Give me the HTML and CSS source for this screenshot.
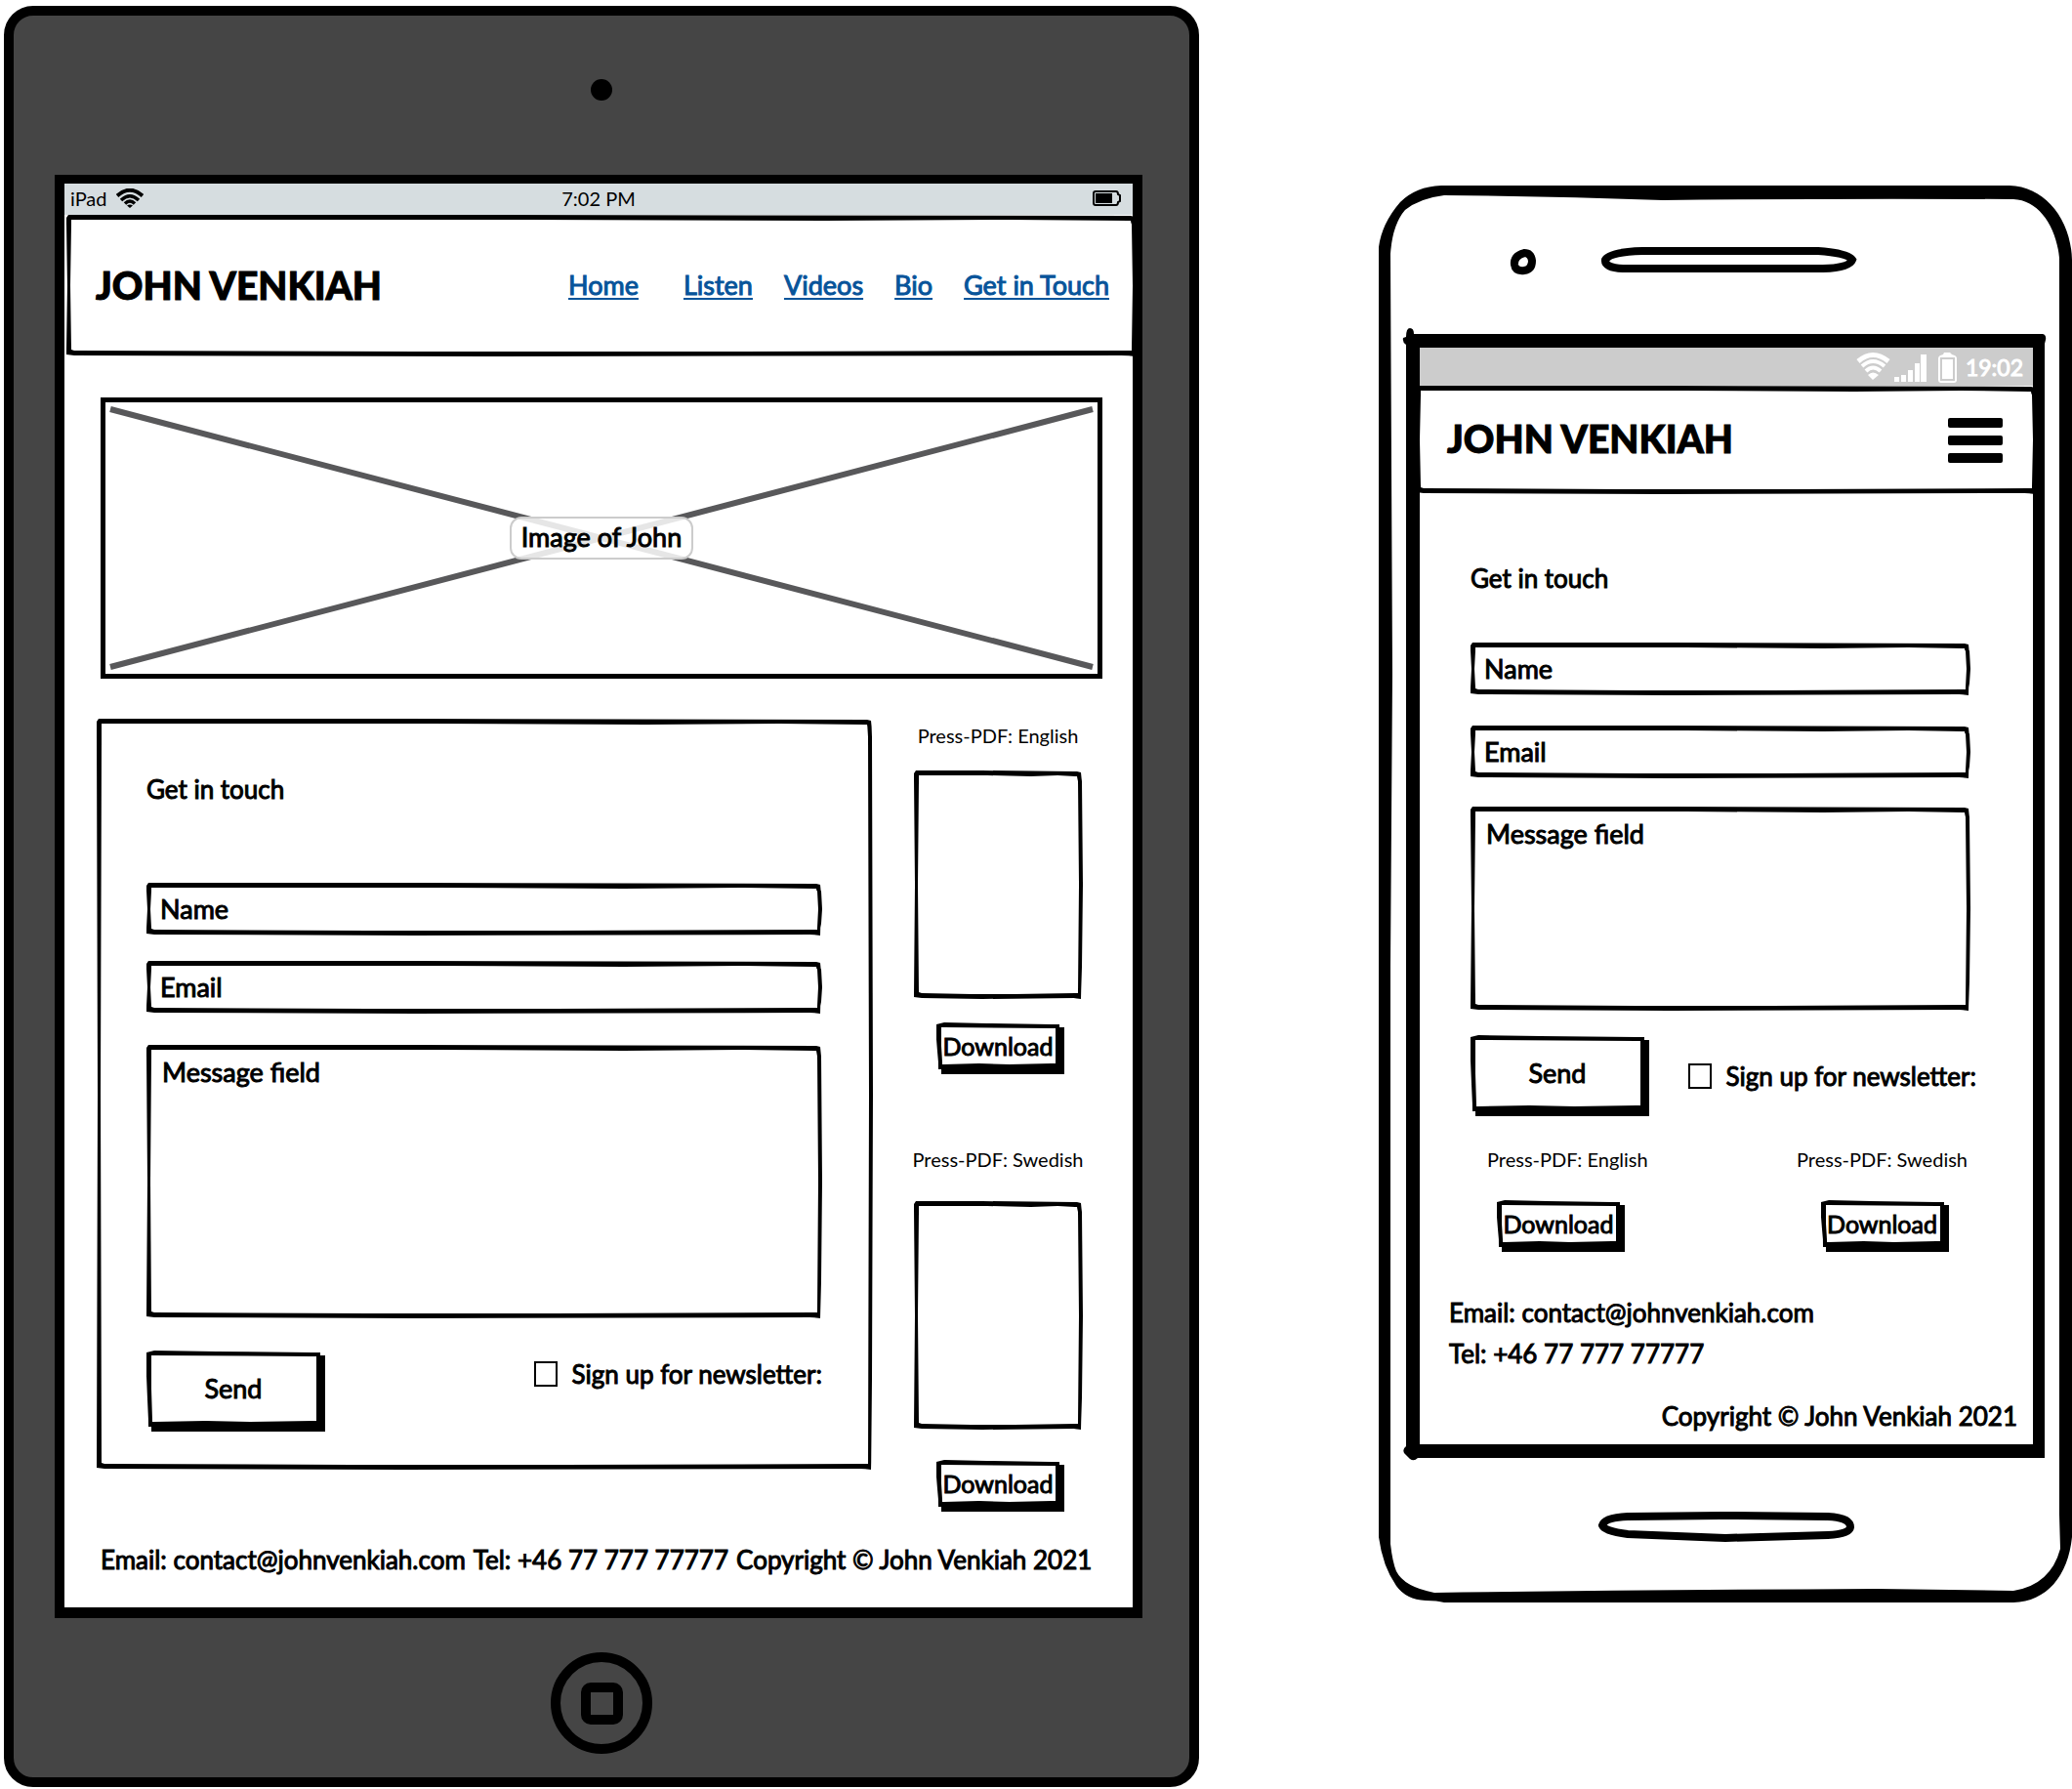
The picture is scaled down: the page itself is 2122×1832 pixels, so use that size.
FILE: index.html
```html
<!DOCTYPE html>
<html lang="en">
<head>
<meta charset="utf-8">
<meta name="viewport" content="width=device-width, initial-scale=1">
<title>John Venkiah – Get in touch</title>
<link rel="stylesheet" href="styles.css">
</head>
<body>
<div class="board">

  <section class="tablet" aria-label="Tablet">
    <div class="bezel bezel-top"><span class="camera"></span></div>
    <div class="tablet-screen">
      <div class="status">
        <span class="carrier">iPad
          <svg class="wifi" viewBox="0 0 28 20" aria-hidden="true"><g fill="none" stroke="currentColor" stroke-width="4"><path d="M1 7.500Q14-4 27 7.500"/><path stroke-width="3.500" d="M5 12Q14 3.500 23 12"/><path stroke-width="3.500" d="M9 15.500Q14 10.500 19 15.500"/></g><path d="M11 17.500Q14 15.500 17 17.500L14 20Z"/></svg>
        </span>
        <span>7:02 PM</span>
        <span class="power"><svg class="battery" viewBox="0 0 30 16" aria-hidden="true"><path d="M3 1H24Q26 1 26 4L28 5V11L26 12Q26 15 24 15H3Q1 15 1 13V3Q1 1 3 1Z" fill="none" stroke="currentColor" stroke-width="2"/><path d="M3 3H20V13H3Z"/></svg></span>
      </div>
      <header class="site-header sketch">
        <h1 class="logo">JOHN VENKIAH</h1>
        <nav class="nav">
          <a class="nav-home" href="#home">Home</a>
          <a href="#listen">Listen</a>
          <a href="#videos">Videos</a>
          <a href="#bio">Bio</a>
          <a href="#touch">Get in Touch</a>
        </nav>
      </header>
      <main class="tablet-main">
        <figure class="hero">
          <svg class="cross" viewBox="0 0 1008 270" preserveAspectRatio="none" aria-hidden="true"><path d="M1 3L1007 267M1 267L1007 3"/></svg>
          <figcaption class="hero-label">Image of John</figcaption>
        </figure>
        <div class="columns">
          <form class="card sketch">
            <h2 class="title">Get in touch</h2>
            <input class="field sketch" type="text" placeholder="Name" aria-label="Name">
            <input class="field sketch" type="email" placeholder="Email" aria-label="Email">
            <textarea class="field area sketch" placeholder="Message field" aria-label="Message field"></textarea>
            <div class="actions">
              <button class="button send" type="button">Send</button>
              <label class="check"><input type="checkbox"><span>Sign up for newsletter:</span></label>
            </div>
          </form>
          <aside class="press">
            <section class="pdf">
              <h3 class="caption">Press-PDF: English</h3>
              <div class="thumb sketch"></div>
              <button class="button" type="button">Download</button>
            </section>
            <section class="pdf pdf-loose">
              <h3 class="caption">Press-PDF: Swedish</h3>
              <div class="thumb sketch"></div>
              <button class="button" type="button">Download</button>
            </section>
          </aside>
        </div>
      </main>
      <footer class="tablet-footer">
        <span>Email: contact@johnvenkiah.com</span>
        <span>Tel: +46 77 777 77777</span>
        <span class="copyright">Copyright © John Venkiah 2021</span>
      </footer>
    </div>
    <div class="bezel bezel-bottom"><span class="home"><span class="home-mark"></span></span></div>
  </section>

  <section class="phone" aria-label="Phone">
    <svg class="phone-frame" viewBox="0 0 710 1450" preserveAspectRatio="none" aria-hidden="true">
      <path fill-rule="evenodd" d="M64 0H646C682 1 709 34 710 76V1383C706 1423 684 1449 650 1450H67Q60 1448 48 1448Q28 1447 18 1433Q4 1413 0 1383V63Q3 39 22 17Q38 1 64 0ZM67 10Q42 13 27 25Q14 40 12 70L14 500L12 800V1390Q14 1408 18 1418Q26 1434 57 1440Q290 1437 510 1436L650 1438Q688 1432 698 1395L697 1360V74C694 42 676 15 650 14Q460 13 291 15Q180 11 67 10Z"/>
      <path fill-rule="evenodd" d="M28 155Q28 146 32 146Q36 146 36 152H680Q684 153 683 158L682 162V1302H40Q36 1306 32 1303L26 1297Q24 1293 28 1290V163Q24 160 25 156ZM42 166V1288H670V166Z"/>
      <g fill="none" stroke="#000">
        <path stroke-width="8" d="M149 69Q138 72 139 81Q140 88 149 87Q157 86 157 77Q156 69 149 69Z"/>
        <path stroke-width="8" d="M270 67H390L450 67Q480 69 485 76Q482 84 455 85H250Q231 84 232 76Q237 68 270 67Z"/>
        <path stroke-width="8" d="M255 1362L350 1361L460 1362Q483 1363 483 1373Q482 1380 460 1381L355 1384L255 1380Q231 1377 229 1371Q231 1363 255 1362Z"/>
      </g>
    </svg>
    <div class="phone-screen">
      <div class="phone-status">
        <svg class="phone-icons" viewBox="0 0 104 32" aria-hidden="true"><g fill="none" stroke="currentColor" stroke-width="5"><path d="M2 10Q17-3 33 10"/><path stroke-width="4" d="M6 15Q17 5 29 15"/><path stroke-width="4" d="M10 20Q17 13 25 20"/></g><path d="M12 24Q17 19 23 24L17 29ZM39 26H44V31H39ZM46 24H51V31H46ZM53 19H58V31H53ZM60 12H65V31H60ZM66 3H72V31H66Z"/><path fill-rule="evenodd" d="M90 1H96L98 3Q103 4 103 7V29Q103 32 100 32H87Q84 32 84 29V7Q84 4 89 3ZM86 6V30H101V6Z"/><path d="M88 8H99V28H88Z"/></svg>
        <span>19:02</span>
      </div>
      <header class="phone-header sketch">
        <h1 class="logo">JOHN VENKIAH</h1>
        <button class="menu" type="button" aria-label="Menu"><span></span><span></span><span></span></button>
      </header>
      <form class="phone-form">
        <h2 class="title">Get in touch</h2>
        <input class="field sketch" type="text" placeholder="Name" aria-label="Name">
        <input class="field sketch" type="email" placeholder="Email" aria-label="Email">
        <textarea class="field area sketch" placeholder="Message field" aria-label="Message field"></textarea>
        <div class="actions">
          <button class="button send" type="button">Send</button>
          <label class="check"><input type="checkbox"><span>Sign up for newsletter:</span></label>
        </div>
      </form>
      <div class="phone-press">
        <section class="pdf pdf-start">
          <h3 class="caption">Press-PDF: English</h3>
          <button class="button" type="button">Download</button>
        </section>
        <section class="pdf">
          <h3 class="caption">Press-PDF: Swedish</h3>
          <button class="button" type="button">Download</button>
        </section>
      </div>
      <footer class="phone-footer">
        <span>Email: contact@johnvenkiah.com</span>
        <span>Tel: +46 77 777 77777</span>
        <span class="copyright">Copyright © John Venkiah 2021</span>
      </footer>
    </div>
  </section>

</div>
</body>
</html>
```
FILE: styles.css
```css
*,
*::before,
*::after {
  box-sizing: border-box;
}

body {
  margin: 0;
  background: #fff;
  color: #000;
  font: 27px/30px Lato, "Open Sans", sans-serif;
  -webkit-text-stroke: 1px currentColor;
}

h1, h2, h3, figure {
  margin: 0;
  font-weight: inherit;
}

input, textarea, button {
  margin: 0;
  font: inherit;
  color: inherit;
}

svg {
  display: block;
  fill: currentColor;
}

.board {
  display: grid;
  grid-template-columns: minmax(0, 1224fr) minmax(0, 710fr);
  column-gap: 184px;
  align-items: start;
  padding: 6px 0 4px 4px;
}

/* Hand-drawn outline: the edges stretch, the line weight does not */
.sketch {
  border: 5px solid #000;
  border-image: url("data:image/svg+xml,%3Csvg xmlns='http://www.w3.org/2000/svg' width='300' height='300'%3E%3Cpath fill-rule='evenodd' d='M2 0L120 0L294 1L298 2L299 12L300 150L299 260L298 300L290 299L120 300L8 299L0 298L1 150L0 8L0 3ZM5 5L130 5L210 6L260 5L294 6L295 12L296 150L295 294L180 295L100 295L8 294L5 293L4 150L5 12Z'/%3E%3C/svg%3E") 8 / 8px;
}

/* Tablet */
.tablet {
  border: 10px solid #000;
  border-radius: 30px;
  background: #454545;
  padding: 0 48px 0 42px;
}

.bezel {
  display: flex;
  justify-content: center;
  height: 163px;
  margin-right: -6px;
}

.bezel-top { padding-top: 65px; }
.bezel-bottom { padding-top: 35px; }

.camera {
  width: 22px;
  height: 22px;
  border-radius: 50%;
  background: #000;
}

.home {
  display: grid;
  place-content: center;
  width: 104px;
  height: 104px;
  border: 10px solid #000;
  border-radius: 50%;
}

.home-mark {
  width: 43px;
  height: 43px;
  border: 10px solid #000;
  border-radius: 10px;
}

.tablet-screen {
  border: solid #000;
  border-width: 9px 10px 11px;
  background: #fff;
}

.status {
  display: grid;
  grid-template-columns: 1fr auto 1fr;
  align-items: center;
  height: 32px;
  padding: 0 6px 3px;
  background: #d6dde0;
  font-size: 20px;
  line-height: 24px;
  -webkit-text-stroke: 0;
}

.carrier {
  display: flex;
  align-items: center;
  gap: 10px;
}

.wifi { width: 28px; height: 20px; }

.power {
  justify-self: end;
  margin-right: 5px;
}

.battery { width: 30px; height: 16px; }

.site-header {
  display: flex;
  align-items: center;
  justify-content: space-between;
  min-height: 145px;
  margin: 0 -4px 0 2px;
  padding: 0 23px 2px 25px;
}

.logo {
  font-size: 39px;
  line-height: 48px;
  font-weight: 900;
}

.nav {
  display: flex;
  gap: 32px;
}

.nav a {
  color: #07549a;
  text-decoration-thickness: 2px;
  text-underline-offset: 3px;
}

.nav-home { margin-right: 14px; }

.tablet-main { padding: 42px 31px 0 33px; }

.hero {
  display: grid;
  place-items: center;
  height: 288px;
  margin-left: 4px;
  border: 5px solid #000;
  padding: 4px;
}

.hero > * { grid-area: 1 / 1; }

.cross {
  width: 100%;
  height: 270px;
  fill: none;
  stroke: #58585a;
  stroke-width: 6;
}

.hero-label {
  z-index: 1;
  padding: 4px 10px 6px;
  border: 2px solid #ccc;
  border-radius: 12px;
  background: rgba(255, 255, 255, 0.85);
}

.columns {
  display: grid;
  grid-template-columns: minmax(0, 1fr) 180px;
  column-gap: 38px;
  align-items: start;
  margin-top: 41px;
  padding-right: 17px;
}

/* Form */
.card,
.phone-form {
  display: flex;
  flex-direction: column;
}

.card { padding: 52px 47px 39px 46px; }

.title {
  font-size: 26px;
  line-height: 30px;
}

.field {
  display: block;
  width: 100%;
  height: 54px;
  padding: 0 9px 2px;
  background: #fff;
  outline: none;
}

.field::placeholder {
  color: #000;
  opacity: 1;
}

.area {
  padding: 8px 11px;
  resize: none;
}

.card .field { margin-top: 26px; }
.card .title + .field { margin-top: 81px; }
.card .area { height: 280px; margin-top: 32px; }

.actions {
  display: flex;
  justify-content: space-between;
  align-items: flex-start;
}

.card .actions { margin-top: 33px; }

/* Same drawn line, closed square on the two sides that meet the shadow */
.button {
  flex: none;
  width: 126px;
  height: 48px;
  padding: 0;
  border: 5px solid #000;
  border-image: url("data:image/svg+xml,%3Csvg xmlns='http://www.w3.org/2000/svg' width='300' height='300'%3E%3Cpath fill-rule='evenodd' d='M8 0L120 1L300 2V300H2L1 200L0 90L0 2ZM5 5L296 6V294L180 295L100 294L6 295L5 150Z'/%3E%3C/svg%3E") 8 / 8px;
  background: #fff;
  box-shadow: 5px 5px 0 #000;
  font-size: 25px;
  white-space: nowrap;
}

.send {
  width: 178px;
  height: 78px;
  font-size: 27px;
}

.check {
  display: flex;
  align-items: center;
  gap: 15px;
  padding-top: 9px;
  font-size: 26px;
  white-space: nowrap;
}

.check input {
  appearance: none;
  width: 24px;
  height: 26px;
  border: 2px solid #000;
  background: #fff;
}

/* Press material */
.press {
  display: grid;
  gap: 80px;
  padding-top: 5px;
}

.pdf {
  display: flex;
  flex-direction: column;
  align-items: center;
  gap: 24px;
}

.pdf-loose { gap: 31px; }

.caption {
  font-size: 20px;
  line-height: 24px;
  white-space: nowrap;
  -webkit-text-stroke: 0;
}

.thumb {
  width: 173px;
  height: 234px;
}

.tablet-footer {
  display: flex;
  gap: 8px;
  padding: 39px 44px 34px 37px;
  font-size: 26px;
  white-space: nowrap;
}

.tablet-footer .copyright { margin-left: auto; }

/* Phone */
.phone {
  position: relative;
  margin-top: 184px;
  padding: 166px 40px 162px 42px;
}

.phone-frame {
  position: absolute;
  inset: 0;
  width: 100%;
  height: 100%;
}

.phone-screen { position: relative; }

.phone-status {
  display: flex;
  align-items: center;
  justify-content: flex-end;
  gap: 8px;
  height: 39px;
  padding-right: 10px;
  background: #ccc;
  color: #fff;
  font-size: 23px;
}

.phone-icons { width: 104px; height: 32px; }

.phone-header {
  display: flex;
  align-items: center;
  justify-content: space-between;
  min-height: 111px;
  margin: 0 -4px;
  padding: 0 30px 0 27px;
}

.phone-header .logo { padding-bottom: 4px; }

.menu {
  display: grid;
  gap: 8px;
  width: 56px;
  padding: 0;
  border: 0;
  background: none;
}

.menu span {
  height: 10px;
  border-radius: 2px;
  background: #000;
}

.phone-form { padding: 71px 64px 0 52px; }
.phone-form .field { margin-top: 31px; }
.phone-form .title + .field { margin-top: 51px; }
.phone-form .area { height: 209px; margin-top: 29px; }
.phone-form .actions { margin-top: 25px; }

.phone-form .check {
  padding-top: 27px;
  margin-right: -6px;
}

.phone-press {
  display: flex;
  justify-content: space-between;
  padding: 37px 67px 0 69px;
}

.phone-press .pdf { gap: 30px; }
.phone-press .pdf-start { align-items: flex-start; }
.pdf-start .button { margin-left: 10px; }

.phone-footer {
  display: flex;
  flex-direction: column;
  gap: 12px;
  padding: 52px 16px 14px 30px;
  font-size: 26px;
}

.phone-footer .copyright {
  align-self: flex-end;
  margin-top: 22px;
}
```
